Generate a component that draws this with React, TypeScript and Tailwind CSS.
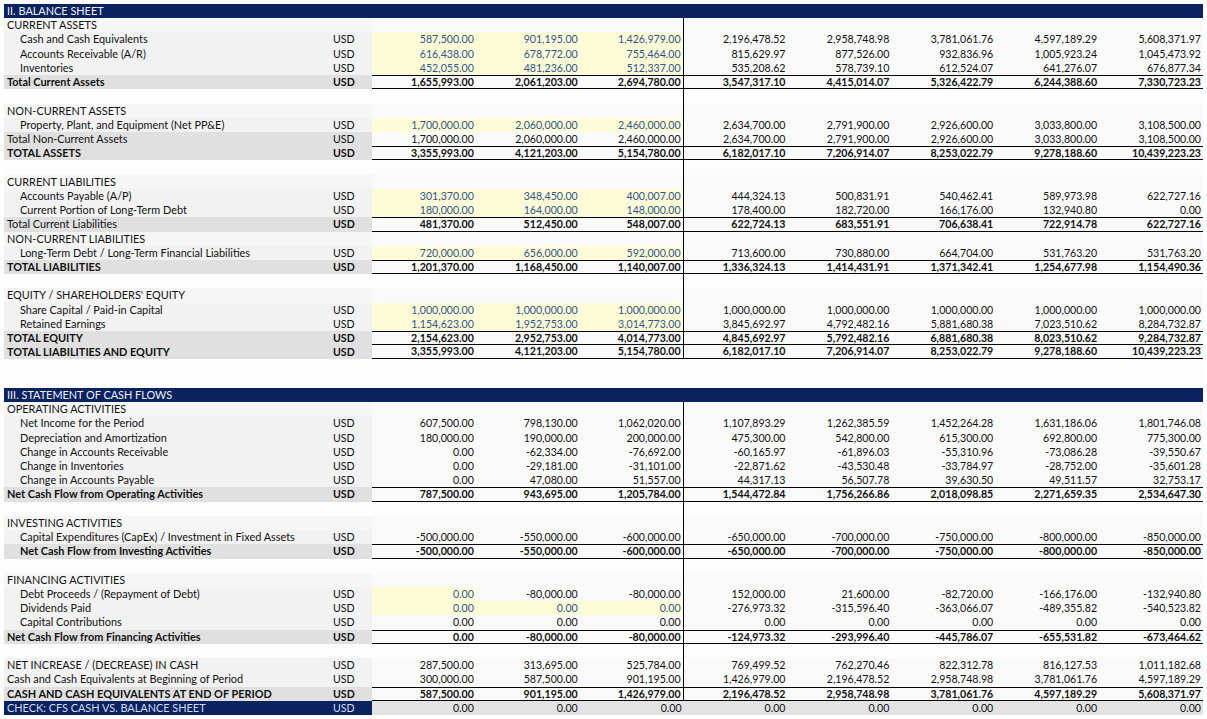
import React from "react";

type Kind = "header" | "section" | "item" | "total" | "blank" | "check" | "plain";
interface Row {
  k: Kind;
  label?: string;
  indent?: boolean;
  bl?: boolean; // bold label
  bu?: boolean; // bold usd
  bn?: boolean; // bold numbers
  v?: string[];
  y?: number[]; // yellow columns
  bt?: boolean;
  bb?: boolean;
  vl?: boolean; // vertical line after col 3
}

const same = (s: string) => [s, s, s, s, s, s, s, s];

const rows: Row[] = [
  { k: "header", label: "II. BALANCE SHEET" },
  { k: "section", label: "CURRENT ASSETS", vl: true },
  { k: "item", label: "Cash and Cash Equivalents", indent: true, vl: true, y: [0, 1, 2], v: ["587,500.00", "901,195.00", "1,426,979.00", "2,196,478.52", "2,958,748.98", "3,781,061.76", "4,597,189.29", "5,608,371.97"] },
  { k: "item", label: "Accounts Receivable (A/R)", indent: true, vl: true, y: [0, 1, 2], v: ["616,438.00", "678,772.00", "755,464.00", "815,629.97", "877,526.00", "932,836.96", "1,005,923.24", "1,045,473.92"] },
  { k: "item", label: "Inventories", indent: true, vl: true, y: [0, 1, 2], v: ["452,055.00", "481,236.00", "512,337.00", "535,208.62", "578,739.10", "612,524.07", "641,276.07", "676,877.34"] },
  { k: "total", label: "Total Current Assets", bl: true, bu: true, bn: true, bt: true, bb: true, vl: true, v: ["1,655,993.00", "2,061,203.00", "2,694,780.00", "3,547,317.10", "4,415,014.07", "5,326,422.79", "6,244,388.60", "7,330,723.23"] },
  { k: "blank", vl: true },
  { k: "section", label: "NON-CURRENT ASSETS", vl: true },
  { k: "item", label: "Property, Plant, and Equipment (Net PP&E)", indent: true, vl: true, y: [0, 1, 2], v: ["1,700,000.00", "2,060,000.00", "2,460,000.00", "2,634,700.00", "2,791,900.00", "2,926,600.00", "3,033,800.00", "3,108,500.00"] },
  { k: "total", label: "Total Non-Current Assets", vl: true, v: ["1,700,000.00", "2,060,000.00", "2,460,000.00", "2,634,700.00", "2,791,900.00", "2,926,600.00", "3,033,800.00", "3,108,500.00"] },
  { k: "total", label: "TOTAL ASSETS", bl: true, bu: true, bn: true, bt: true, bb: true, vl: true, v: ["3,355,993.00", "4,121,203.00", "5,154,780.00", "6,182,017.10", "7,206,914.07", "8,253,022.79", "9,278,188.60", "10,439,223.23"] },
  { k: "blank", vl: true },
  { k: "section", label: "CURRENT LIABILITIES", vl: true },
  { k: "item", label: "Accounts Payable (A/P)", indent: true, vl: true, y: [0, 1, 2], v: ["301,370.00", "348,450.00", "400,007.00", "444,324.13", "500,831.91", "540,462.41", "589,973.98", "622,727.16"] },
  { k: "item", label: "Current Portion of Long-Term Debt", indent: true, vl: true, y: [0, 1, 2], v: ["180,000.00", "164,000.00", "148,000.00", "178,400.00", "182,720.00", "166,176.00", "132,940.80", "0.00"] },
  { k: "total", label: "Total Current Liabilities", bu: true, bn: true, bt: true, bb: true, vl: true, v: ["481,370.00", "512,450.00", "548,007.00", "622,724.13", "683,551.91", "706,638.41", "722,914.78", "622,727.16"] },
  { k: "section", label: "NON-CURRENT LIABILITIES", vl: true },
  { k: "item", label: "Long-Term Debt / Long-Term Financial Liabilities", indent: true, vl: true, y: [0, 1, 2], v: ["720,000.00", "656,000.00", "592,000.00", "713,600.00", "730,880.00", "664,704.00", "531,763.20", "531,763.20"] },
  { k: "total", label: "TOTAL LIABILITIES", bl: true, bu: true, bn: true, bt: true, bb: true, vl: true, v: ["1,201,370.00", "1,168,450.00", "1,140,007.00", "1,336,324.13", "1,414,431.91", "1,371,342.41", "1,254,677.98", "1,154,490.36"] },
  { k: "blank", vl: true },
  { k: "section", label: "EQUITY / SHAREHOLDERS' EQUITY", vl: true },
  { k: "item", label: "Share Capital / Paid-in Capital", indent: true, vl: true, y: [0, 1, 2], v: same("1,000,000.00") },
  { k: "item", label: "Retained Earnings", indent: true, vl: true, y: [0, 1, 2], v: ["1,154,623.00", "1,952,753.00", "3,014,773.00", "3,845,692.97", "4,792,482.16", "5,881,680.38", "7,023,510.62", "8,284,732.87"] },
  { k: "total", label: "TOTAL EQUITY", bl: true, bu: true, bn: true, bt: true, bb: true, vl: true, v: ["2,154,623.00", "2,952,753.00", "4,014,773.00", "4,845,692.97", "5,792,482.16", "6,881,680.38", "8,023,510.62", "9,284,732.87"] },
  { k: "total", label: "TOTAL LIABILITIES AND EQUITY", bl: true, bu: true, bn: true, bb: true, vl: true, v: ["3,355,993.00", "4,121,203.00", "5,154,780.00", "6,182,017.10", "7,206,914.07", "8,253,022.79", "9,278,188.60", "10,439,223.23"] },
  { k: "blank" },
  { k: "blank" },
  { k: "header", label: "III. STATEMENT OF CASH FLOWS" },
  { k: "section", label: "OPERATING ACTIVITIES", vl: true },
  { k: "item", label: "Net Income for the Period", indent: true, vl: true, v: ["607,500.00", "798,130.00", "1,062,020.00", "1,107,893.29", "1,262,385.59", "1,452,264.28", "1,631,186.06", "1,801,746.08"] },
  { k: "item", label: "Depreciation and Amortization", indent: true, vl: true, v: ["180,000.00", "190,000.00", "200,000.00", "475,300.00", "542,800.00", "615,300.00", "692,800.00", "775,300.00"] },
  { k: "item", label: "Change in Accounts Receivable", indent: true, vl: true, v: ["0.00", "-62,334.00", "-76,692.00", "-60,165.97", "-61,896.03", "-55,310.96", "-73,086.28", "-39,550.67"] },
  { k: "item", label: "Change in Inventories", indent: true, vl: true, v: ["0.00", "-29,181.00", "-31,101.00", "-22,871.62", "-43,530.48", "-33,784.97", "-28,752.00", "-35,601.28"] },
  { k: "item", label: "Change in Accounts Payable", indent: true, vl: true, v: ["0.00", "47,080.00", "51,557.00", "44,317.13", "56,507.78", "39,630.50", "49,511.57", "32,753.17"] },
  { k: "total", label: "Net Cash Flow from Operating Activities", bl: true, bu: true, bn: true, bt: true, bb: true, vl: true, v: ["787,500.00", "943,695.00", "1,205,784.00", "1,544,472.84", "1,756,266.86", "2,018,098.85", "2,271,659.35", "2,534,647.30"] },
  { k: "blank", vl: true },
  { k: "section", label: "INVESTING ACTIVITIES", vl: true },
  { k: "item", label: "Capital Expenditures (CapEx) / Investment in Fixed Assets", indent: true, vl: true, v: ["-500,000.00", "-550,000.00", "-600,000.00", "-650,000.00", "-700,000.00", "-750,000.00", "-800,000.00", "-850,000.00"] },
  { k: "total", label: "Net Cash Flow from Investing Activities", indent: true, bl: true, bu: true, bn: true, bt: true, bb: true, vl: true, v: ["-500,000.00", "-550,000.00", "-600,000.00", "-650,000.00", "-700,000.00", "-750,000.00", "-800,000.00", "-850,000.00"] },
  { k: "blank", vl: true },
  { k: "section", label: "FINANCING ACTIVITIES", vl: true },
  { k: "item", label: "Debt Proceeds / (Repayment of Debt)", indent: true, vl: true, y: [0], v: ["0.00", "-80,000.00", "-80,000.00", "152,000.00", "21,600.00", "-82,720.00", "-166,176.00", "-132,940.80"] },
  { k: "item", label: "Dividends Paid", indent: true, vl: true, y: [0, 1, 2], v: ["0.00", "0.00", "0.00", "-276,973.32", "-315,596.40", "-363,066.07", "-489,355.82", "-540,523.82"] },
  { k: "item", label: "Capital Contributions", indent: true, vl: true, v: same("0.00") },
  { k: "total", label: "Net Cash Flow from Financing Activities", bl: true, bu: true, bn: true, bt: true, bb: true, vl: true, v: ["0.00", "-80,000.00", "-80,000.00", "-124,973.32", "-293,996.40", "-445,786.07", "-655,531.82", "-673,464.62"] },
  { k: "blank", vl: true },
  { k: "item", label: "NET INCREASE / (DECREASE) IN CASH", vl: true, v: ["287,500.00", "313,695.00", "525,784.00", "769,499.52", "762,270.46", "822,312.78", "816,127.53", "1,011,182.68"] },
  { k: "item", label: "Cash and Cash Equivalents at Beginning of Period", vl: true, v: ["300,000.00", "587,500.00", "901,195.00", "1,426,979.00", "2,196,478.52", "2,958,748.98", "3,781,061.76", "4,597,189.29"] },
  { k: "total", label: "CASH AND CASH EQUIVALENTS AT END OF PERIOD", bl: true, bu: true, bn: true, bt: true, bb: true, vl: true, v: ["587,500.00", "901,195.00", "1,426,979.00", "2,196,478.52", "2,958,748.98", "3,781,061.76", "4,597,189.29", "5,608,371.97"] },
  { k: "check", label: "CHECK: CFS CASH VS. BALANCE SHEET", v: same("0.00") },
];

const GRID = "grid grid-cols-[322px_46px_repeat(8,minmax(0,1fr))] h-[14.22px] leading-[14.22px]";

function DataCell({ row, i }: { row: Row; i: number }) {
  const yellow = row.y?.includes(i);
  const vline = row.vl && i === 2;
  const val = row.v ? row.v[i] : "";
  let bg = "bg-[#fafafa]";
  if (row.k === "blank") bg = "bg-[#fdfdfd]";
  if (row.k === "check") bg = "bg-[#e3e3e3]";
  if (yellow) bg = "bg-[#fefcd7]";
  return (
    <div
      className={[
        "text-right pr-[2px] whitespace-nowrap overflow-hidden",
        bg,
        yellow ? "text-[#31558c]" : "text-[#111111]",
        row.bn ? "font-bold" : "",
        row.bt ? "border-t border-black" : "",
        row.bb ? "border-b border-black" : "",
        vline ? "border-r border-black" : "",
        row.bt || row.bb ? "leading-[12.5px]" : "",
      ].join(" ")}
    >
      {val}
    </div>
  );
}

function SheetRow({ row }: { row: Row }) {
  if (row.k === "header") {
    return (
      <div className="h-[14.22px] leading-[14.22px] bg-[#0b2260] text-[#eef3fb] text-[10.9px] pl-[3px] whitespace-nowrap">
        {row.label}
      </div>
    );
  }
  let labelBg = "bg-[#f2f2f2]";
  if (row.k === "section") labelBg = "bg-[#f6f6f6]";
  if (row.k === "total") labelBg = "bg-[#e0e0e0]";
  if (row.k === "blank") labelBg = "bg-[#fdfdfd]";
  if (row.k === "check") labelBg = "bg-[#0b2260]";
  const textCol = row.k === "check" ? "text-[#cfdcf0]" : "text-[#111111]";
  const showUsd = row.k !== "section" && row.k !== "blank";
  return (
    <div className={GRID}>
      <div
        className={[
          labelBg,
          textCol,
          "whitespace-nowrap overflow-hidden text-[10.9px]",
          row.indent ? "pl-[16px]" : "pl-[3px]",
          row.bl ? "font-bold" : "",
        ].join(" ")}
      >
        {row.label ?? ""}
      </div>
      <div className={[labelBg, textCol, "pl-[7px]", row.bu ? "font-bold" : ""].join(" ")}>
        {showUsd ? "USD" : ""}
      </div>
      {[0, 1, 2, 3, 4, 5, 6, 7].map((i) => (
        <DataCell key={i} row={row} i={i} />
      ))}
    </div>
  );
}

export default function App() {
  return (
    <div className="w-[1207px] h-[719px] bg-white pt-[4px] pl-[4px] pr-[4px] font-['Lato',sans-serif] text-[10.6px] overflow-hidden">
      <div className="w-[1199px]">
        {rows.map((r, idx) => (
          <SheetRow key={idx} row={r} />
        ))}
      </div>
    </div>
  );
}
